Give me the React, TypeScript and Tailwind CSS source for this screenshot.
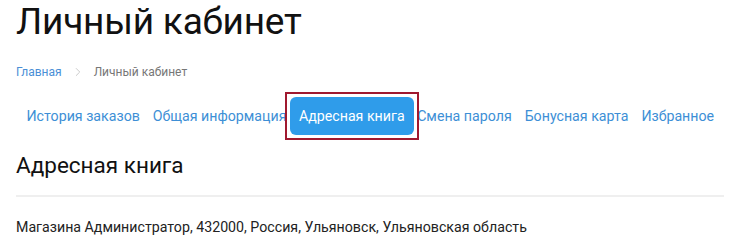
import { ChevronRight } from "lucide-react";

const tabs = [
  { label: "История заказов" },
  { label: "Общая информация" },
  { label: "Адресная книга", active: true },
  { label: "Смена пароля" },
  { label: "Бонусная карта" },
  { label: "Избранное" },
];

export default function App() {
  return (
    <div className="min-h-[243px] bg-white px-4 font-['Roboto',sans-serif] text-[#111]">
      {/* Заголовок страницы */}
      <h1 className="pt-[1px] text-[37px] leading-[42px] font-normal tracking-[-0.2px]">
        Личный кабинет
      </h1>

      {/* Хлебные крошки */}
      <nav className="mt-[19px] flex items-center text-[12px] leading-[20px]">
        <a className="text-[#4a8fd6]">Главная</a>
        <ChevronRight className="mx-[9px] h-3.5 w-3.5 text-[#c4c4c4]" strokeWidth={1.5} />
        <span className="text-[#777]">Личный кабинет</span>
      </nav>

      {/* Вкладки */}
      <div className="mt-[15px] flex items-center whitespace-nowrap pl-1 text-[14.2px]">
        {tabs.map((tab) =>
          tab.active ? (
            <span key={tab.label} className="relative -mx-[3px] shrink-0">
              <span className="block rounded-md bg-[#2f9cea] px-[9px] py-[9px] leading-5 text-white">
                {tab.label}
              </span>
              <span className="pointer-events-none absolute -inset-[5px] border-2 border-[#a0192f]" />
            </span>
          ) : (
            <a key={tab.label} className="shrink-0 px-[6.5px] leading-5 text-[#3d8fd6]">
              {tab.label}
            </a>
          ),
        )}
      </div>

      {/* Адресная книга */}
      <h2 className="mt-[15px] text-[22.5px] leading-[30px] font-normal">Адресная книга</h2>
      <div className="mt-[15px] border-t-2 border-[#efefef]" />
      <p className="mt-[20px] text-[14.2px] leading-5 text-[#222]">
        Магазина Администратор, 432000, Россия, Ульяновск, Ульяновская область
      </p>
    </div>
  );
}
